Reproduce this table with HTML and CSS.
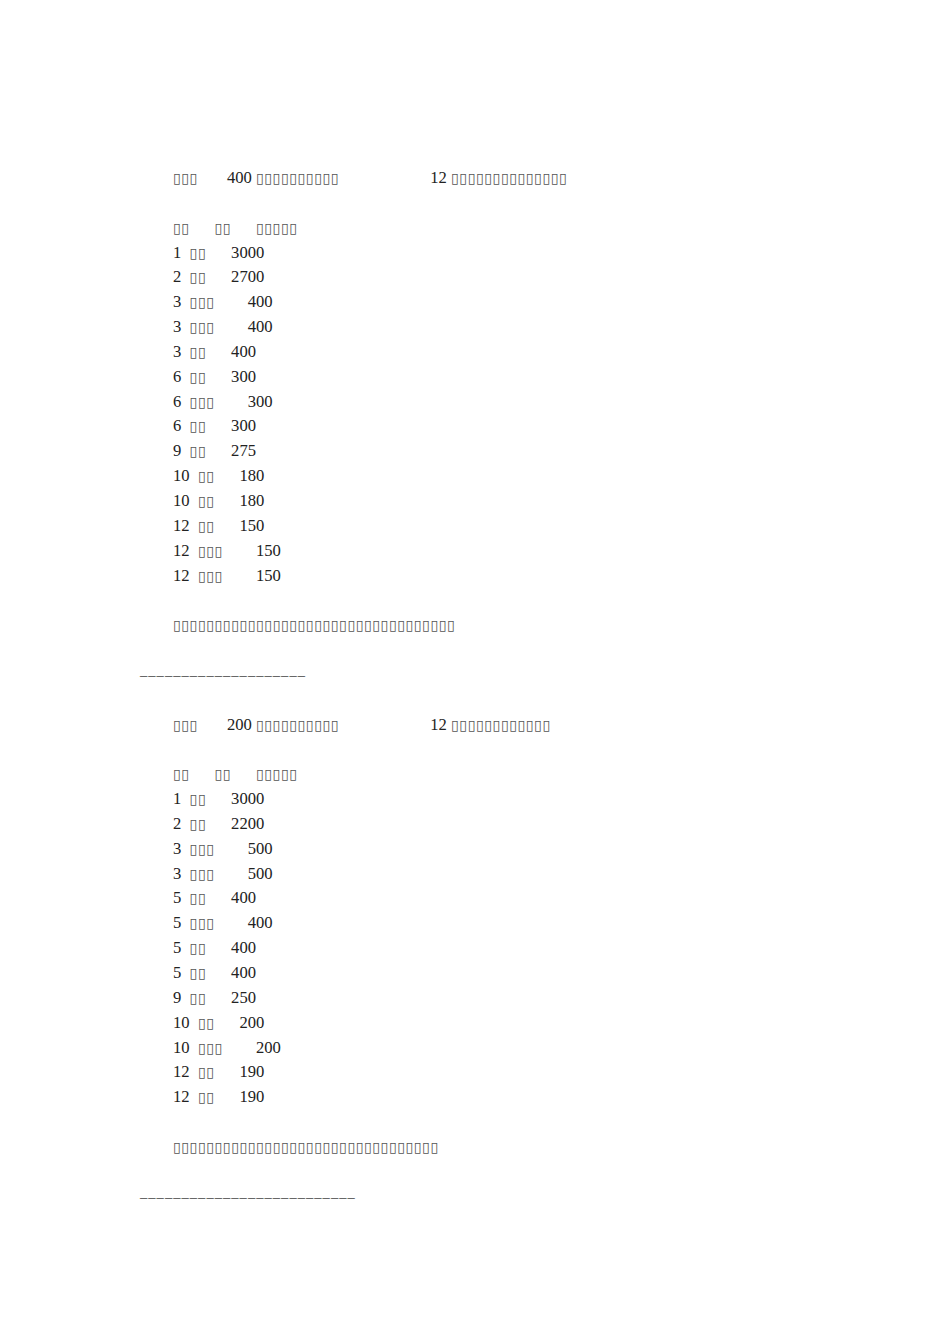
FILE: index.html
```html
<!DOCTYPE html>
<html lang="zh">
<head>
<meta charset="utf-8">
<title>Document</title>
<link rel="stylesheet" href="styles.css">
</head>
<body>
<main class="doc">
  <section class="part">
    <p class="line head"><span class="cj">▯▯▯</span>       400 <span class="cj">▯▯▯▯▯▯▯▯▯▯</span>                      12 <span class="cj">▯▯▯▯▯▯▯▯▯▯▯▯▯▯</span></p>
    <div class="table">
      <p class="line"><span class="cj">▯▯</span>      <span class="cj">▯▯</span>      <span class="cj">▯▯▯▯▯</span></p>
      <p class="line">1  <span class="cj">▯▯</span>      3000</p>
      <p class="line">2  <span class="cj">▯▯</span>      2700</p>
      <p class="line">3  <span class="cj">▯▯▯</span>        400</p>
      <p class="line">3  <span class="cj">▯▯▯</span>        400</p>
      <p class="line">3  <span class="cj">▯▯</span>      400</p>
      <p class="line">6  <span class="cj">▯▯</span>      300</p>
      <p class="line">6  <span class="cj">▯▯▯</span>        300</p>
      <p class="line">6  <span class="cj">▯▯</span>      300</p>
      <p class="line">9  <span class="cj">▯▯</span>      275</p>
      <p class="line">10  <span class="cj">▯▯</span>      180</p>
      <p class="line">10  <span class="cj">▯▯</span>      180</p>
      <p class="line">12  <span class="cj">▯▯</span>      150</p>
      <p class="line">12  <span class="cj">▯▯▯</span>        150</p>
      <p class="line">12  <span class="cj">▯▯▯</span>        150</p>
    </div>
    <p class="line note"><span class="cj">▯▯▯▯▯▯▯▯▯▯▯▯▯▯▯▯▯▯▯▯▯▯▯▯▯▯▯▯▯▯▯▯▯▯</span></p>
    <p class="rule">––––––––––––––––––––</p>
  </section>
  <section class="part">
    <p class="line head"><span class="cj">▯▯▯</span>       200 <span class="cj">▯▯▯▯▯▯▯▯▯▯</span>                      12 <span class="cj">▯▯▯▯▯▯▯▯▯▯▯▯</span></p>
    <div class="table">
      <p class="line"><span class="cj">▯▯</span>      <span class="cj">▯▯</span>      <span class="cj">▯▯▯▯▯</span></p>
      <p class="line">1  <span class="cj">▯▯</span>      3000</p>
      <p class="line">2  <span class="cj">▯▯</span>      2200</p>
      <p class="line">3  <span class="cj">▯▯▯</span>        500</p>
      <p class="line">3  <span class="cj">▯▯▯</span>        500</p>
      <p class="line">5  <span class="cj">▯▯</span>      400</p>
      <p class="line">5  <span class="cj">▯▯▯</span>        400</p>
      <p class="line">5  <span class="cj">▯▯</span>      400</p>
      <p class="line">5  <span class="cj">▯▯</span>      400</p>
      <p class="line">9  <span class="cj">▯▯</span>      250</p>
      <p class="line">10  <span class="cj">▯▯</span>      200</p>
      <p class="line">10  <span class="cj">▯▯▯</span>        200</p>
      <p class="line">12  <span class="cj">▯▯</span>      190</p>
      <p class="line">12  <span class="cj">▯▯</span>      190</p>
    </div>
    <p class="line note"><span class="cj">▯▯▯▯▯▯▯▯▯▯▯▯▯▯▯▯▯▯▯▯▯▯▯▯▯▯▯▯▯▯▯▯</span></p>
    <p class="rule">––––––––––––––––––––––––––</p>
  </section>
</main>
</body>
</html>
```
FILE: styles.css
```css
html, body {
  margin: 0;
  padding: 0;
  background: #ffffff;
}
.doc {
  padding: 166px 0 0 140px;
  font-family: "Liberation Serif", "Times New Roman", serif;
  font-size: 16.6px;
  line-height: 24.85px;
  color: #222222;
}
.part p {
  margin: 0;
}
.line {
  white-space: pre;
  padding-left: 33px;
}
.cj {
  font-family: "DejaVu Sans", sans-serif;
  font-size: 14px;
  line-height: 1;
  letter-spacing: 0.6px;
  color: #555555;
}
.head,
.table,
.note,
.rule {
  margin-bottom: 24.85px !important;
}
.rule {
  white-space: pre;
  font-size: 14.5px;
  letter-spacing: 1.05px;
  color: #444444;
}
```
